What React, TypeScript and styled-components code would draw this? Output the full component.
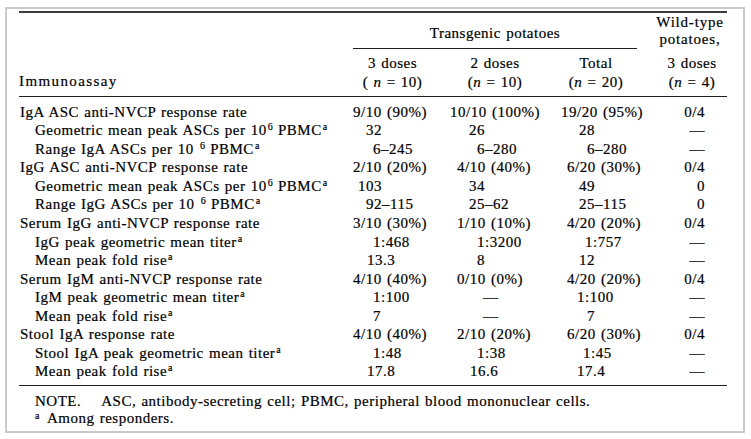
import styled, { createGlobalStyle } from "styled-components";

type Row = {
  label: React.ReactNode;
  sub?: boolean;
  cells: [string, number][];
  wild: string;
};

const Ten6 = ({ gap }: { gap?: boolean }) => (
  <>
    10{gap ? " " : ""}
    <Sup>6</Sup>
  </>
);

const A = () => <Sup>a</Sup>;

const rows: Row[] = [
  {
    label: "IgA ASC anti-NVCP response rate",
    cells: [["9/10 (90%)", 8], ["10/10 (100%)", 10], ["19/20 (95%)", 11]],
    wild: "0/4",
  },
  {
    label: (
      <>
        Geometric mean peak ASCs per <Ten6 /> PBMC<A />
      </>
    ),
    sub: true,
    cells: [["32", 21], ["26", 29], ["28", 29]],
    wild: "—",
  },
  {
    label: (
      <>
        Range IgA ASCs per <Ten6 gap /> PBMC<A />
      </>
    ),
    sub: true,
    cells: [["6–245", 28], ["6–280", 37], ["6–280", 37]],
    wild: "—",
  },
  {
    label: "IgG ASC anti-NVCP response rate",
    cells: [["2/10 (20%)", 8], ["4/10 (40%)", 17], ["6/20 (30%)", 17]],
    wild: "0/4",
  },
  {
    label: (
      <>
        Geometric mean peak ASCs per <Ten6 /> PBMC<A />
      </>
    ),
    sub: true,
    cells: [["103", 13], ["34", 29], ["49", 29]],
    wild: "0",
  },
  {
    label: (
      <>
        Range IgG ASCs per <Ten6 gap /> PBMC<A />
      </>
    ),
    sub: true,
    cells: [["92–115", 21], ["25–62", 29], ["25–115", 29]],
    wild: "0",
  },
  {
    label: "Serum IgG anti-NVCP response rate",
    cells: [["3/10 (30%)", 8], ["1/10 (10%)", 17], ["4/20 (20%)", 17]],
    wild: "0/4",
  },
  {
    label: (
      <>
        IgG peak geometric mean titer<A />
      </>
    ),
    sub: true,
    cells: [["1:468", 28], ["1:3200", 37], ["1:757", 35]],
    wild: "—",
  },
  {
    label: (
      <>
        Mean peak fold rise<A />
      </>
    ),
    sub: true,
    cells: [["13.3", 22], ["8", 37], ["12", 29]],
    wild: "—",
  },
  {
    label: "Serum IgM anti-NVCP response rate",
    cells: [["4/10 (40%)", 8], ["0/10 (0%)", 17], ["4/20 (20%)", 17]],
    wild: "0/4",
  },
  {
    label: (
      <>
        IgM peak geometric mean titer<A />
      </>
    ),
    sub: true,
    cells: [["1:100", 28], ["—", 43], ["1:100", 27]],
    wild: "—",
  },
  {
    label: (
      <>
        Mean peak fold rise<A />
      </>
    ),
    sub: true,
    cells: [["7", 28], ["—", 43], ["7", 37]],
    wild: "—",
  },
  {
    label: "Stool IgA response rate",
    cells: [["4/10 (40%)", 8], ["2/10 (20%)", 17], ["6/20 (30%)", 17]],
    wild: "0/4",
  },
  {
    label: (
      <>
        Stool IgA peak geometric mean titer<A />
      </>
    ),
    sub: true,
    cells: [["1:48", 28], ["1:38", 37], ["1:45", 33]],
    wild: "—",
  },
  {
    label: (
      <>
        Mean peak fold rise<A />
      </>
    ),
    sub: true,
    cells: [["17.8", 22], ["16.6", 30], ["17.4", 27]],
    wild: "—",
  },
];

export default function App() {
  return (
    <>
      <GlobalStyle />
      <Frame>
        <Header>
          <HeadLabel>Immunoassay</HeadLabel>
          <GroupHead>Transgenic potatoes</GroupHead>
          <WildHead>
            Wild-type
            <br />
            potatoes,
          </WildHead>
          <SubHead>
            3 doses
            <br />( <I>n</I> = 10)
          </SubHead>
          <SubHead>
            2 doses
            <br />(<I>n</I> = 10)
          </SubHead>
          <SubHead $shift={-4}>
            Total
            <br />(<I>n</I> = 20)
          </SubHead>
          <SubHead $shift={4}>
            3 doses
            <br />(<I>n</I> = 4)
          </SubHead>
        </Header>

        <Body>
          {rows.map((r, i) => (
            <BodyRow key={i}>
              <Label $sub={r.sub}>{r.label}</Label>
              {r.cells.map(([t, x], j) => (
                <Val key={j} $x={x}>
                  {t}
                </Val>
              ))}
              <WildVal>{r.wild}</WildVal>
            </BodyRow>
          ))}
        </Body>

        <Notes>
          <NoteLine>
            <NoteTag>NOTE.</NoteTag>ASC, antibody-secreting cell; PBMC, peripheral
            blood mononuclear cells.
          </NoteLine>
          <NoteLine>
            <FootMark>a</FootMark>Among responders.
          </NoteLine>
        </Notes>
      </Frame>
    </>
  );
}

const GlobalStyle = createGlobalStyle`
  html, body {
    margin: 0;
    padding: 0;
    background: #ffffff;
  }
`;

const COLS = "326px 95px 110px 100px 76px";

const Frame = styled.div`
  box-sizing: border-box;
  margin: 7px 0 0 5px;
  width: 740px;
  height: 426px;
  border: 2px solid #c9c9c9;
  padding: 2px 16px 0 12px;
  color: #000000;
  font-family: "Liberation Serif", "Times New Roman", serif;
  font-size: 15px;
  letter-spacing: 0.5px;
  word-spacing: 1px;
  -webkit-text-stroke: 0.2px #000000;
`;

const Header = styled.div`
  display: grid;
  grid-template-columns: ${COLS};
  grid-template-rows: 36px 47px;
  border-top: 2px solid #3c3c3c;
  border-bottom: 1px solid #1e1e1e;
`;

const HeadLabel = styled.div`
  grid-column: 1;
  grid-row: 2;
  align-self: end;
  padding-bottom: 5px;
  line-height: 19px;
  letter-spacing: 1.4px;
`;

const GroupHead = styled.div`
  grid-column: 2 / span 3;
  grid-row: 1;
  align-self: end;
  margin: 0 13px 0 8px;
  padding-bottom: 6px;
  border-bottom: 1px solid #1e1e1e;
  line-height: 18px;
  text-align: center;
`;

const WildHead = styled.div`
  grid-column: 5;
  grid-row: 1;
  align-self: end;
  padding: 0 0 1px 4px;
  line-height: 17px;
  text-align: center;
  letter-spacing: 0.8px;
`;

const SubHead = styled.div<{ $shift?: number }>`
  grid-row: 2;
  align-self: end;
  padding-bottom: 4.5px;
  line-height: 19px;
  text-align: center;
  transform: translateX(${({ $shift }) => $shift ?? 0}px);
`;

const I = styled.i`
  font-style: italic;
`;

const Body = styled.div`
  padding: 5.7px 0 4px;
  border-bottom: 1.5px solid #1e1e1e;
`;

const BodyRow = styled.div`
  display: grid;
  grid-template-columns: ${COLS};
  height: 18.55px;
  line-height: 18.55px;
  white-space: nowrap;
`;

const Label = styled.div<{ $sub?: boolean }>`
  padding-left: ${({ $sub }) => ($sub ? 16 : 1)}px;
`;

const Val = styled.div<{ $x: number }>`
  padding-left: ${({ $x }) => $x}px;
`;

const WildVal = styled.div`
  text-align: right;
  padding-right: 21px;
`;

const Sup = styled.sup`
  font-size: 10px;
  letter-spacing: 0;
  line-height: 0;
  vertical-align: 5px;
  margin-left: 1px;
`;

const Notes = styled.div`
  padding: 7px 0 0 16px;
`;

const NoteLine = styled.div`
  line-height: 17px;
  white-space: nowrap;
`;

const NoteTag = styled.span`
  margin-right: 20px;
`;

const FootMark = styled.sup`
  font-size: 10px;
  line-height: 0;
  vertical-align: 4px;
  margin-right: 7px;
`;
